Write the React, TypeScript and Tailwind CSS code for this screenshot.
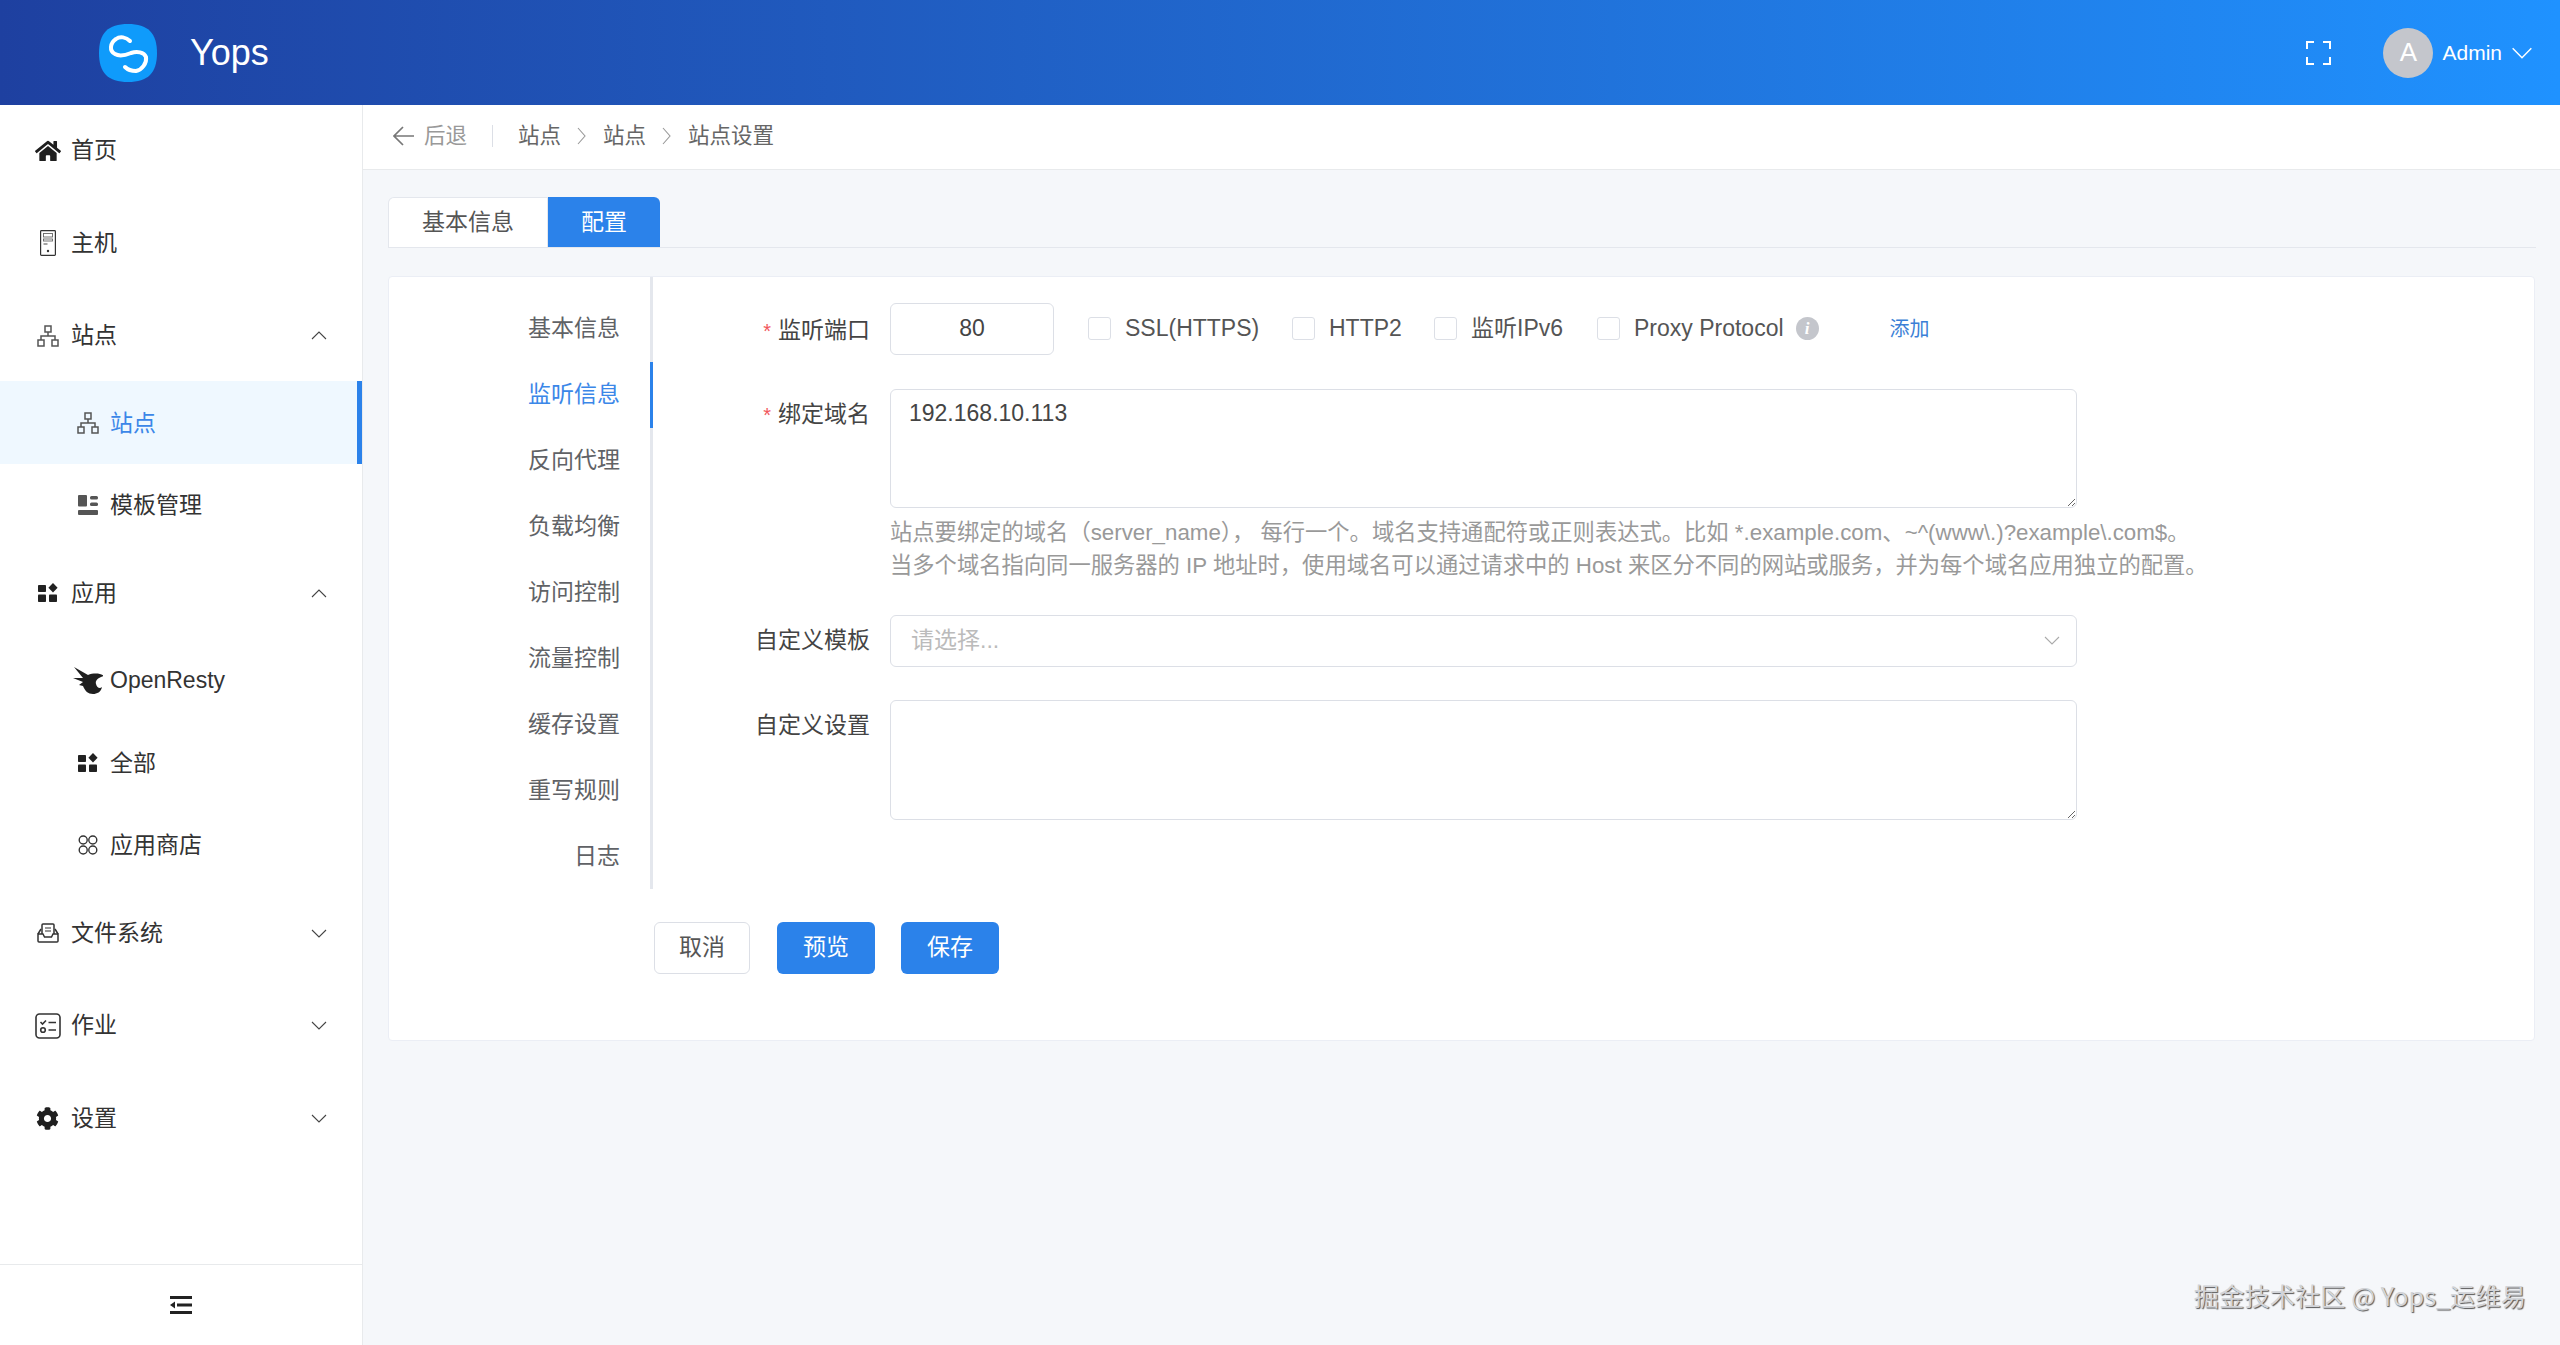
import { FaHome, FaCog } from 'react-icons/fa';

const font = "[font-family:'Liberation_Sans','Noto_Sans_CJK_SC',sans-serif]";

function Chevron({ up = false, className = '' }: { up?: boolean; className?: string }) {
  return (
    <svg viewBox="0 0 16 9" fill="none" stroke="currentColor" strokeWidth="1.1" className={className}>
      <polyline points={up ? '1,8 8,1 15,8' : '1,1 8,8 15,1'} />
    </svg>
  );
}

function CrumbArrow() {
  return (
    <svg viewBox="0 0 9 18" fill="none" stroke="#999" strokeWidth="1.1" className="w-[9px] h-[18px] ml-[16px]">
      <polyline points="1,1 8,9 1,17" />
    </svg>
  );
}

function HostIcon() {
  return (
    <svg viewBox="0 0 16 26" fill="none" stroke="#333" strokeWidth="1.2" className="w-[16px] h-[26px]">
      <rect x="0.6" y="0.6" width="14.8" height="24.8" rx="0.8" />
      <rect x="3.5" y="3.5" width="9" height="3.5" strokeWidth="0.9" stroke="#666" />
      <rect x="3.5" y="9" width="9" height="2" strokeWidth="0.9" stroke="#666" />
      <line x1="3.5" y1="14" x2="7.5" y2="14" stroke="#666" />
      <circle cx="8" cy="21" r="1.2" fill="#333" stroke="none" />
    </svg>
  );
}

function ClusterIcon({ color = '#555' }: { color?: string }) {
  return (
    <svg viewBox="0 0 22 22" fill="none" stroke={color} strokeWidth="1.5" className="w-[22px] h-[22px]">
      <rect x="8" y="1" width="6" height="6" />
      <rect x="1" y="15" width="6" height="6" />
      <rect x="15" y="15" width="6" height="6" />
      <path d="M11 7v4M4 15v-4h14v4" />
    </svg>
  );
}

function TemplateIcon() {
  return (
    <svg viewBox="0 0 20 20" fill="#555" className="w-[20px] h-[20px]">
      <rect x="0" y="0" width="9" height="11.5" rx="1" />
      <rect x="12" y="1" width="8" height="3.5" rx="1.5" />
      <rect x="12" y="7.5" width="8" height="3.5" rx="1.5" />
      <rect x="0" y="15" width="20" height="5" rx="1" />
    </svg>
  );
}

function AppsIcon() {
  return (
    <svg viewBox="0 0 20 20" fill="#222" className="w-[20px] h-[20px]">
      <rect x="0" y="2" width="8" height="7" rx="0.8" />
      <rect x="0" y="11.5" width="8" height="7.5" rx="0.8" />
      <rect x="11" y="11.5" width="8" height="7.5" rx="0.8" />
      <path d="M15 0l4.6 4.8L15 9.5l-4.6-4.7z" />
    </svg>
  );
}

function BirdIcon() {
  return (
    <svg viewBox="0 0 30 28" fill="#1f1f1f" className="w-[30px] h-[28px]">
      <path d="M1 1L15 9C20 7 28 7 31 10L28 11C25 12 22 15 23 18C24 22 27 23 29 21C28 26 24 28 20 28C15 28 12 25 10 20L6 19L10 16L0 12L10 12Z" />
    </svg>
  );
}

function StoreIcon() {
  return (
    <svg viewBox="0 0 20 20" fill="none" stroke="#333" strokeWidth="1.4" className="w-[20px] h-[20px]">
      <circle cx="5.2" cy="5" r="4" />
      <circle cx="14.8" cy="5" r="4" />
      <circle cx="5.2" cy="15" r="4" />
      <circle cx="14.8" cy="15" r="4" />
    </svg>
  );
}

function InboxIcon() {
  return (
    <svg viewBox="0 0 22 20" fill="none" stroke="#333" strokeWidth="1.5" className="w-[22px] h-[20px]">
      <path d="M1 11l3-5M21 11l-3-5" />
      <path d="M1 11h5l1.5 3h7l1.5-3h5v7a1 1 0 0 1-1 1H2a1 1 0 0 1-1-1z" />
      <path d="M5 11V2a1 1 0 0 1 1-1h10a1 1 0 0 1 1 1v9" />
      <path d="M8 5h6M8 8h6" strokeWidth="1.2" />
    </svg>
  );
}

function TaskIcon() {
  return (
    <svg viewBox="0 0 26 26" fill="none" stroke="#333" strokeWidth="1.6" className="w-[26px] h-[26px]">
      <rect x="1" y="1" width="24" height="24" rx="3.5" />
      <path d="M5.5 9l2 2 3.5-3.5M13.5 9.5h7.5M13.5 17h7.5" />
      <circle cx="8" cy="17" r="2.3" />
    </svg>
  );
}

function CollapseIcon() {
  return (
    <svg viewBox="0 0 22 18" fill="#222" className="w-[22px] h-[18px]">
      <rect x="0" y="0" width="22" height="3" />
      <rect x="7" y="7.5" width="15" height="3" />
      <rect x="0" y="15" width="22" height="3" />
      <path d="M0 9l5-3.5v7z" />
    </svg>
  );
}

function FullscreenIcon() {
  return (
    <svg viewBox="0 0 25 24" fill="none" stroke="#fff" strokeWidth="2" className="w-[25px] h-[24px]">
      <path d="M8 1H1v7M17 1h7v7M1 16v7h7M24 16v7h-7" />
    </svg>
  );
}

function LogoIcon() {
  return (
    <svg viewBox="0 0 58 58" className="w-[58px] h-[58px]">
      <path d="M29 0C49 0 58 9 58 29S49 58 29 58 0 49 0 29 9 0 29 0z" fill="#0f9bfb" />
      <path
        d="M31 17C27 13 21 12 17 15C11 19 10 27 16 30C21 33 27 31 32 29C38 27 45 28 47 33C48 39 43 46 37 47C32 47 28 45 26 43"
        fill="none"
        stroke="#fff"
        strokeWidth="4"
        strokeLinecap="round"
      />
    </svg>
  );
}

function TopItem({ icon, label, open }: { icon: React.ReactNode; label: string; open?: boolean }) {
  return (
    <div className="h-[92.5px] flex items-center pl-[34px] pr-[35px] pt-[1.5px] text-[23px] text-[#333]">
      <span className="w-[27px] flex justify-center shrink-0">{icon}</span>
      <span className="ml-[10px] flex-1">{label}</span>
      {open !== undefined && <Chevron up={open} className="w-[16px] h-[9px] text-[#444]" />}
    </div>
  );
}

function SubItem({ icon, label, active }: { icon: React.ReactNode; label: string; active?: boolean }) {
  return (
    <div
      className={`h-[82.5px] flex items-center pl-[73px] pt-[1px] text-[23px] border-r-[5px] ${
        active ? 'bg-[#eff8ff] text-[#3b87e8] border-[#2b82ea]' : 'text-[#333] border-transparent'
      }`}
    >
      <span className="w-[30px] flex justify-center shrink-0">{icon}</span>
      <span className="ml-[7px]">{label}</span>
    </div>
  );
}

function Sidebar() {
  return (
    <aside className="w-[363px] shrink-0 h-full bg-white border-r border-[#e8eaec] flex flex-col">
      <div className="flex-1 -mt-[1.5px]">
        <TopItem icon={<FaHome className="w-[26px] h-[24px] text-[#1f1f1f]" />} label="首页" />
        <TopItem icon={<HostIcon />} label="主机" />
        <TopItem icon={<ClusterIcon />} label="站点" open />
        <SubItem icon={<ClusterIcon />} label="站点" active />
        <SubItem icon={<TemplateIcon />} label="模板管理" />
        <TopItem icon={<AppsIcon />} label="应用" open />
        <SubItem icon={<BirdIcon />} label="OpenResty" />
        <SubItem icon={<AppsIcon />} label="全部" />
        <SubItem icon={<StoreIcon />} label="应用商店" />
        <TopItem icon={<InboxIcon />} label="文件系统" open={false} />
        <TopItem icon={<TaskIcon />} label="作业" open={false} />
        <TopItem icon={<FaCog className="w-[23px] h-[23px] text-[#1f1f1f]" />} label="设置" open={false} />
      </div>
      <div className="h-[81px] border-t border-[#e8eaec] flex items-center justify-center">
        <CollapseIcon />
      </div>
    </aside>
  );
}

function Checkbox({ label, w }: { label: string; w: string }) {
  return (
    <label className={`flex items-center shrink-0 ${w}`}>
      <span className="w-[23px] h-[23px] border border-[#dcdfe6] rounded-[3px] bg-white" />
      <span className="ml-[14px] text-[#555] whitespace-nowrap">{label}</span>
    </label>
  );
}

function FormRow({ label, required, top, children }: { label: string; required?: boolean; top: string; children: React.ReactNode }) {
  return (
    <div className="flex items-start">
      <div className={`w-[217px] shrink-0 text-right text-[#444] ${top}`}>
        {required && <span className="text-[#f2565b] mr-[7px] text-[20px]">*</span>}
        {label}
      </div>
      <div className="ml-[20px] min-w-0">{children}</div>
    </div>
  );
}

const SECTIONS = ['基本信息', '监听信息', '反向代理', '负载均衡', '访问控制', '流量控制', '缓存设置', '重写规则', '日志'];

function ConfigForm() {
  return (
    <div className="text-[23px] pt-[25.5px]">
      <FormRow label="监听端口" required top="pt-[10px]">
        <div className="flex items-center h-[52px]">
          <div className="w-[164px] h-[52px] border border-[#dcdfe6] rounded-[6px] flex items-center justify-center text-[#444]">80</div>
          <div className="ml-[34px] flex items-center">
            <Checkbox label="SSL(HTTPS)" w="w-[204px]" />
            <Checkbox label="HTTP2" w="w-[142px]" />
            <Checkbox label="监听IPv6" w="w-[163px]" />
            <Checkbox label="Proxy Protocol" w="w-auto" />
            <span className="ml-[12px] w-[23px] h-[23px] rounded-full bg-[#c4c6cc] text-white flex items-center justify-center text-[17px] italic font-bold [font-family:'Liberation_Serif',serif]">i</span>
            <span className="ml-[71px] text-[20px] text-[#3b7fd6]">添加</span>
          </div>
        </div>
      </FormRow>
      <div className="h-[34px]" />
      <FormRow label="绑定域名" required top="pt-[8px]">
        <textarea
          defaultValue="192.168.10.113"
          className="block w-[1187px] h-[119px] border border-[#dcdfe6] rounded-[6px] px-[18px] py-[5.5px] text-[#444] text-[23px] leading-[36px] outline-none"
        />
        <div className="mt-[8px] text-[22.3px] leading-[33px] text-[#999] whitespace-nowrap">
          <div>站点要绑定的域名（server_name）， 每行一个。域名支持通配符或正则表达式。比如 *.example.com、~^(www\.)?example\.com$。</div>
          <div>当多个域名指向同一服务器的 IP 地址时，使用域名可以通过请求中的 Host 来区分不同的网站或服务，并为每个域名应用独立的配置。</div>
        </div>
      </FormRow>
      <div className="h-[33px]" />
      <FormRow label="自定义模板" top="pt-[8px]">
        <div className="w-[1187px] h-[52px] border border-[#dcdfe6] rounded-[6px] flex items-center justify-between pl-[20px] pr-[16px]">
          <span className="text-[#bbb]">请选择...</span>
          <Chevron className="w-[16px] h-[9px] text-[#aaa]" />
        </div>
      </FormRow>
      <div className="h-[33px]" />
      <FormRow label="自定义设置" top="pt-[8px]">
        <textarea className="block w-[1187px] h-[120px] border border-[#dcdfe6] rounded-[6px] outline-none" />
      </FormRow>
    </div>
  );
}

function Main() {
  return (
    <main className="flex-1 min-w-0 h-full bg-[#f5f7fa] flex flex-col">
      <div className="h-[65px] shrink-0 bg-white border-b border-[#e8eaec] flex items-center pl-[30px] pb-[2px] text-[21.5px] text-[#666]">
        <svg viewBox="0 0 22 20" fill="none" stroke="#777" strokeWidth="1.7" className="w-[22px] h-[20px]">
          <path d="M21 10H2M10 1l-9 9 9 9" />
        </svg>
        <span className="ml-[9px] text-[#999]">后退</span>
        <span className="ml-[25px] w-px h-[22px] bg-[#dcdfe6]" />
        <span className="ml-[25px]">站点</span>
        <CrumbArrow />
        <span className="ml-[17px]">站点</span>
        <CrumbArrow />
        <span className="ml-[17px]">站点设置</span>
      </div>

      <div className="flex-1 px-[25px] pt-[27px]">
        <div className="h-[51px] flex border-b border-[#e4e7ed] mr-[-1px]">
          <div className="w-[160px] bg-white border border-[#e4e7ed] border-b-0 rounded-tl-[6px] flex items-center justify-center text-[23px] text-[#555]">基本信息</div>
          <div className="w-[112px] bg-[#2b82ea] rounded-tr-[6px] flex items-center justify-center text-[23px] text-white">配置</div>
        </div>

        <div className="mt-[28px] h-[764.5px] bg-white border border-[#ebeef5] rounded-[4px]">
          <div className="flex">
            <nav className="w-[264px] h-[611.5px] shrink-0 border-r-[3px] border-[#e4e7ed] pt-[18.5px] text-[23px] text-[#606266]">
              {SECTIONS.map((s) => (
                <div
                  key={s}
                  className={`h-[66px] flex items-center justify-end pr-[30px] -mr-[3px] border-r-[3px] ${
                    s === '监听信息' ? 'text-[#3b87e8] border-[#2b82ea]' : 'border-transparent'
                  }`}
                >
                  {s}
                </div>
              ))}
            </nav>
            <ConfigForm />
          </div>
          <div className="mt-[33px] pl-[265px] flex text-[23px]">
            <button className="w-[96px] h-[52px] border border-[#dcdfe6] rounded-[6px] bg-white text-[#555]">取消</button>
            <button className="ml-[27px] w-[98px] h-[52px] rounded-[6px] bg-[#2b82ea] text-white">预览</button>
            <button className="ml-[26px] w-[98px] h-[52px] rounded-[6px] bg-[#2b82ea] text-white">保存</button>
          </div>
        </div>
      </div>
    </main>
  );
}

export default function App() {
  return (
    <div className={`relative w-full h-[1345px] overflow-hidden flex flex-col ${font}`}>
      <header className="h-[105px] shrink-0 bg-gradient-to-r from-[#1e40a0] to-[#1f92ff] flex items-center pl-[99px] pr-[27px] text-white">
        <LogoIcon />
        <span className="ml-[33px] text-[36px] flex-1">Yops</span>
        <FullscreenIcon />
        <div className="ml-[52px] w-[50px] h-[50px] rounded-full bg-[#c4c6cc] flex items-center justify-center text-[26px]">A</div>
        <span className="ml-[9px] text-[21px]">Admin</span>
        <Chevron className="ml-[9px] w-[22px] h-[12px]" />
      </header>
      <div className="flex-1 min-h-0 flex">
        <Sidebar />
        <Main />
      </div>
      <div className="absolute right-[34px] top-[1276px] text-[25.3px] leading-[38px] text-[#d2d4d8] [font-family:'Noto_Sans_CJK_SC',sans-serif] [text-shadow:1px_1px_1px_#555] whitespace-nowrap">
        掘金技术社区 @ Yops_运维易
      </div>
    </div>
  );
}
